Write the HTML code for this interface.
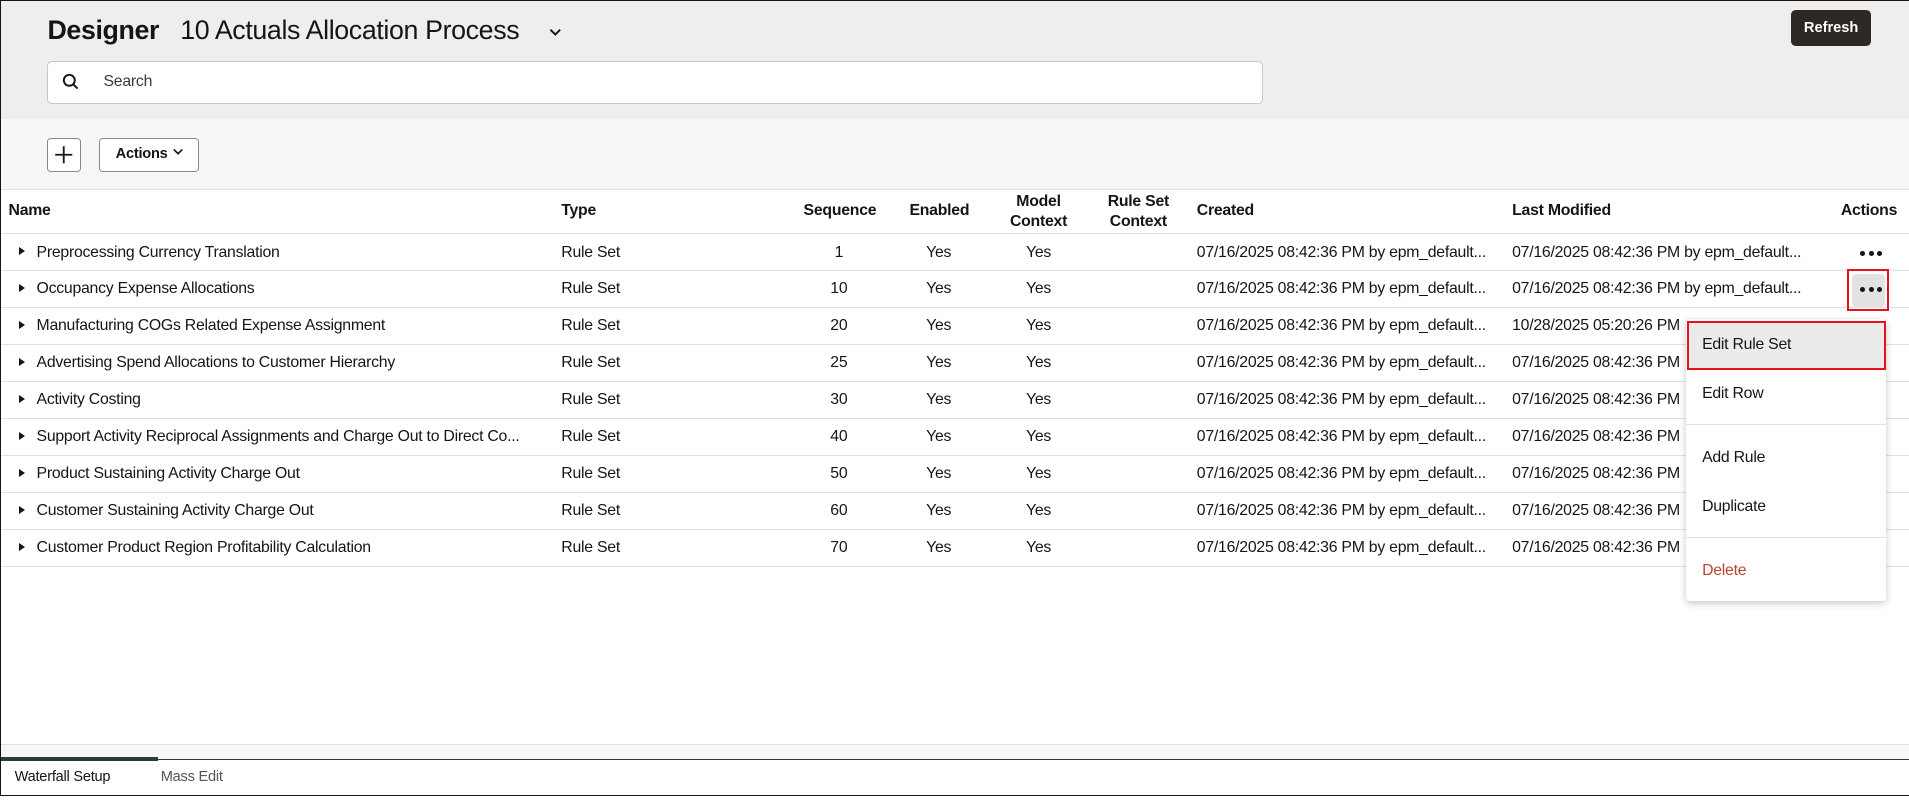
<!DOCTYPE html>
<html><head><meta charset="utf-8"><style>
html,body{margin:0;padding:0;background:#fff;overflow:hidden}
body{width:1909px;height:801px}
#w{zoom:1.2175;width:1568px;height:658px;position:relative;font-family:"Liberation Sans",sans-serif;color:#161513;overflow:hidden}
.a{position:absolute;white-space:nowrap}
.hd{font-size:13px;font-weight:bold;letter-spacing:-0.2px}
.c{font-size:13px;letter-spacing:-0.2px}
.row{position:absolute;left:0;width:1568px;height:30px;border-bottom:1px solid #e2e1df}
.tri{position:absolute;left:16px;top:11px;width:0;height:0;border-left:5px solid #161513;border-top:4px solid transparent;border-bottom:4px solid transparent}
.ctr{text-align:center;transform:translateX(-50%)}
</style></head><body><div id="w">
<div class="a" style="left:0;top:0;width:1568px;height:98px;background:#efeeec"></div>
<div class="a" style="left:0;top:98px;width:1568px;height:57px;background:#f8f7f5;border-bottom:1px solid #e2e1df"></div>
<div class="a" style="left:39px;top:12px;font-size:22px;font-weight:bold;letter-spacing:-0.3px">Designer</div>
<div class="a" style="left:148px;top:12px;font-size:22px;letter-spacing:-0.3px">10 Actuals Allocation Process</div>
<svg class="a" style="left:450px;top:21px" width="12" height="10" viewBox="0 0 12 10"><path d="M2 3l4 4 4-4" fill="none" stroke="#161513" stroke-width="1.6"/></svg>
<div class="a" style="left:1471px;top:8px;width:66px;height:30px;background:#2b2826;border-radius:4px;color:#fff;font-size:12px;font-weight:bold;text-align:center;line-height:30px">Refresh</div>
<div class="a" style="left:39px;top:50px;width:997px;height:34px;background:#fff;border:1px solid #c9c8c5;border-radius:4px"></div>
<svg class="a" style="left:51px;top:60px" width="14" height="14" viewBox="0 0 14 14"><circle cx="6" cy="6" r="4.5" fill="none" stroke="#161513" stroke-width="1.6"/><path d="M9.3 9.3l3.5 3.5" stroke="#161513" stroke-width="1.6"/></svg>
<div class="a c" style="left:85px;top:60px;color:#3a3936">Search</div>
<div class="a" style="left:39px;top:113px;width:26px;height:27px;border:1px solid #8a8986;border-radius:3px;background:#fff"></div>
<svg class="a" style="left:44px;top:119px" width="16" height="16" viewBox="0 0 16 16"><path d="M8 1v14M1 8h14" stroke="#161513" stroke-width="1.5"/></svg>
<div class="a" style="left:81px;top:113px;width:81px;height:27px;border:1px solid #8a8986;border-radius:3px;background:#fff"></div>
<div class="a" style="left:95px;top:120px;font-size:12px;font-weight:bold;letter-spacing:-0.2px">Actions</div>
<svg class="a" style="left:141px;top:121px" width="10" height="8" viewBox="0 0 10 8"><path d="M1.5 2l3.5 3.5 3.5-3.5" fill="none" stroke="#161513" stroke-width="1.4"/></svg>

<div class="row" style="top:156px;height:35px"></div>
<div class="a hd" style="left:7px;top:166px">Name</div>
<div class="a hd" style="left:461px;top:166px">Type</div>
<div class="a hd" style="left:660px;top:166px">Sequence</div>
<div class="a hd" style="left:747px;top:166px">Enabled</div>
<div class="a hd ctr" style="left:853px;top:158px;line-height:16px">Model<br>Context</div>
<div class="a hd ctr" style="left:935px;top:158px;line-height:16px">Rule Set<br>Context</div>
<div class="a hd" style="left:983px;top:166px">Created</div>
<div class="a hd" style="left:1242px;top:166px">Last Modified</div>
<div class="a hd" style="left:1512px;top:166px">Actions</div>

<div id="rows"></div>

<!-- action dots -->
<div class="a" style="left:1528px;top:206px;font-size:0"><span style="display:inline-block;width:4px;height:4px;border-radius:2px;background:#161513;margin-right:3px"></span><span style="display:inline-block;width:4px;height:4px;border-radius:2px;background:#161513;margin-right:3px"></span><span style="display:inline-block;width:4px;height:4px;border-radius:2px;background:#161513"></span></div>
<div class="a" style="left:1517px;top:221px;width:31px;height:31px;border:2px solid #e8121c"></div>
<div class="a" style="left:1521px;top:225px;width:27px;height:27px;background:#e3e2e0;border-radius:3px"></div>
<div class="a" style="left:1528px;top:236px;font-size:0"><span style="display:inline-block;width:4px;height:4px;border-radius:2px;background:#161513;margin-right:3px"></span><span style="display:inline-block;width:4px;height:4px;border-radius:2px;background:#161513;margin-right:3px"></span><span style="display:inline-block;width:4px;height:4px;border-radius:2px;background:#161513"></span></div>

<!-- menu -->
<div class="a" style="left:1385px;top:262px;width:164px;height:232px;background:#fff;box-shadow:0 2px 6px rgba(0,0,0,.22);border-radius:3px"></div>
<div class="a" style="left:1386px;top:264px;width:160px;height:37px;background:#ebebea;border:2px solid #e8121c"></div>
<div class="a c" style="left:1398px;top:276px">Edit Rule Set</div>
<div class="a c" style="left:1398px;top:316px">Edit Row</div>
<div class="a" style="left:1385px;top:348px;width:164px;height:1px;background:#e2e1df"></div>
<div class="a c" style="left:1398px;top:369px">Add Rule</div>
<div class="a c" style="left:1398px;top:409px">Duplicate</div>
<div class="a" style="left:1385px;top:441px;width:164px;height:1px;background:#e2e1df"></div>
<div class="a c" style="left:1398px;top:462px;color:#b8452c">Delete</div>

<!-- bottom -->
<div class="a" style="left:0;top:611px;width:1568px;height:12px;background:#f8f7f5;border-top:1px solid #e2e1df"></div>
<div class="a" style="left:0;top:623px;width:1568px;height:1px;background:#2d3a3e"></div>
<div class="a" style="left:0;top:622px;width:130px;height:3px;background:#2d3a3e"></div>
<div class="a c" style="left:12px;top:632px;font-size:12px">Waterfall Setup</div>
<div class="a c" style="left:132px;top:632px;font-size:12px;color:#555">Mass Edit</div>

<div class="a" style="left:0;top:0;width:1px;height:654px;background:#161513"></div>
<div class="a" style="left:0;top:0;width:1568px;height:1px;background:#161513"></div>
<div class="a" style="left:0;top:653px;width:1568px;height:1px;background:#161513"></div>
</div>
<script>
var d=[["Preprocessing Currency Translation",1,"07/16/2025 08:42:36 PM by epm_default..."],
["Occupancy Expense Allocations",10,"07/16/2025 08:42:36 PM by epm_default..."],
["Manufacturing COGs Related Expense Assignment",20,"10/28/2025 05:20:26 PM"],
["Advertising Spend Allocations to Customer Hierarchy",25,"07/16/2025 08:42:36 PM"],
["Activity Costing",30,"07/16/2025 08:42:36 PM"],
["Support Activity Reciprocal Assignments and Charge Out to Direct Co...",40,"07/16/2025 08:42:36 PM"],
["Product Sustaining Activity Charge Out",50,"07/16/2025 08:42:36 PM"],
["Customer Sustaining Activity Charge Out",60,"07/16/2025 08:42:36 PM"],
["Customer Product Region Profitability Calculation",70,"07/16/2025 08:42:36 PM"]];
var h="";
for(var i=0;i<d.length;i++){var t=192+i*30.35,y=t+8;
h+='<div class="row" style="top:'+t+'px"><div class="tri"></div></div>';
h+='<div class="a c" style="left:30px;top:'+y+'px">'+d[i][0]+'</div>';
h+='<div class="a c" style="left:461px;top:'+y+'px">Rule Set</div>';
h+='<div class="a c ctr" style="left:689px;top:'+y+'px">'+d[i][1]+'</div>';
h+='<div class="a c ctr" style="left:771px;top:'+y+'px">Yes</div>';
h+='<div class="a c ctr" style="left:853px;top:'+y+'px">Yes</div>';
h+='<div class="a c" style="left:983px;top:'+y+'px">07/16/2025 08:42:36 PM by epm_default...</div>';
h+='<div class="a c" style="left:1242px;top:'+y+'px">'+d[i][2]+'</div>';}
document.getElementById("rows").outerHTML=h;
</script>
</body></html>
